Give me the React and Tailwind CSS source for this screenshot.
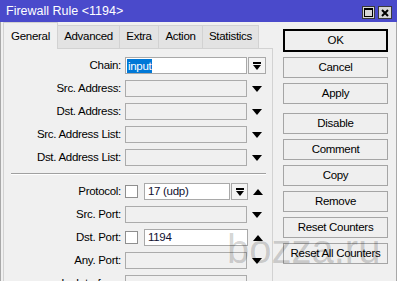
import React from "react";

const tabs = [
  { name: "General", w: "w-[55px]", active: true },
  { name: "Advanced", w: "w-[62px]" },
  { name: "Extra", w: "w-[39px]" },
  { name: "Action", w: "w-[44px]" },
  { name: "Statistics", w: "w-[56px]" },
];

// small drawings used by the combo boxes
function DownTri() {
  return (
    <svg width="10" height="6" viewBox="0 0 10 6">
      <path d="M0 0 H10 L5 6 Z" fill="#000" />
    </svg>
  );
}

function UpTri() {
  return (
    <svg width="10" height="6" viewBox="0 0 10 6">
      <path d="M0 6 H10 L5 0 Z" fill="#000" />
    </svg>
  );
}

function ComboBtn({ w }) {
  return (
    <div className={`${w} h-[17px] ml-[1px] border border-[#a9a9a9] bg-[#f4f4f4] flex items-center justify-center`}>
      <svg width="8" height="8" viewBox="0 0 8 8">
        <rect x="0" y="0" width="8" height="2" fill="#000" />
        <path d="M0 3 H8 L4 8 Z" fill="#000" />
      </svg>
    </div>
  );
}

function Label({ children }) {
  return <div className="w-[117px] text-right whitespace-nowrap">{children}</div>;
}

function Row({ label, children }) {
  return (
    <div className="flex items-center h-[17px]">
      <Label>{label}</Label>
      <div className="ml-[4px] flex items-center">{children}</div>
    </div>
  );
}

function EmptyRow({ label }) {
  return (
    <Row label={label}>
      <div className="w-[122px] h-[17px] border border-[#ababab] bg-[#f0f0f0]" />
      <div className="w-[20px] flex justify-center">
        <DownTri />
      </div>
    </Row>
  );
}

function Check() {
  return <div className="w-[13px] h-[13px] border border-[#8f8f8f] bg-white" />;
}

const buttons = ["Cancel", "Apply", "Disable", "Comment", "Copy", "Remove", "Reset Counters", "Reset All Counters"];

export default function App() {
  return (
    <div className="w-[397px] h-[281px] overflow-hidden relative bg-[#f0f0f0] font-['Liberation_Sans',Arial,sans-serif] text-[11.5px] tracking-[-0.3px] text-black">
      {/* title bar */}
      <div className="h-[22px] bg-[#4a4acb] flex items-center pl-[6px] pr-[5px]">
        <span className="text-white text-[12.5px] tracking-normal">Firewall Rule &lt;1194&gt;</span>
        <div className="ml-auto flex gap-[3px] mt-[3px]">
          <div className="w-[13px] h-[13px] bg-[#d6d6d6] border border-[#3a3a3a] flex items-center justify-center">
            <svg width="9" height="9" viewBox="0 0 9 9">
              <rect x="0.5" y="0.5" width="8" height="8" fill="none" stroke="#000" />
              <rect x="0" y="0" width="9" height="2" fill="#000" />
            </svg>
          </div>
          <div className="w-[14px] h-[13px] bg-[#d6d6d6] border border-[#3a3a3a] flex items-center justify-center">
            <svg width="8" height="8" viewBox="0 0 8 8">
              <path d="M1 1 L7 7 M7 1 L1 7" stroke="#000" strokeWidth="2" />
            </svg>
          </div>
        </div>
      </div>

      <div className="flex border-x border-[#a8a8a8] h-[259px]">
        {/* left: tabs + panel */}
        <div className="ml-[2px] w-[270px] flex flex-col">
          <div className="h-[28px] flex items-end">
            {tabs.map((t) =>
              t.active ? (
                <div
                  key={t.name}
                  className={`${t.w} h-[27px] -mb-px relative z-10 bg-[#f0f0f0] border-x border-t border-[#d2d2d2] flex items-center justify-center pt-[1px]`}
                >
                  {t.name}
                </div>
              ) : (
                <div
                  key={t.name}
                  className={`${t.w} h-[23px] bg-[#e3e3e3] border-r border-t border-[#d2d2d2] flex items-center justify-center`}
                >
                  {t.name}
                </div>
              )
            )}
          </div>
          <div className="flex-1 border border-[#d2d2d2] pt-[8px]">
            <div className="flex flex-col gap-[6px]">
              <Row label="Chain:">
                <div className="w-[122px] h-[17px] border border-[#a9a9a9] bg-white flex items-center pl-[1px]">
                  <span className="bg-[#0078d7] text-white leading-[14px] px-[1px]">input</span>
                </div>
                <ComboBtn w="w-[18px]" />
              </Row>
              <EmptyRow label="Src. Address:" />
              <EmptyRow label="Dst. Address:" />
              <EmptyRow label="Src. Address List:" />
              <EmptyRow label="Dst. Address List:" />
            </div>

            <div className="ml-[7px] mr-[6px] mt-[7px] mb-[8px] border-t border-[#a0a0a0] border-b border-b-white" />

            <div className="flex flex-col gap-[6px]">
              <Row label="Protocol:">
                <Check />
                <div className="ml-[6px] w-[86px] h-[17px] border border-[#a9a9a9] bg-white flex items-center pl-[3px] text-[#101030]">
                  17 (udp)
                </div>
                <ComboBtn w="w-[17px]" />
                <div className="w-[20px] flex justify-center">
                  <UpTri />
                </div>
              </Row>
              <EmptyRow label="Src. Port:" />
              <Row label="Dst. Port:">
                <Check />
                <div className="ml-[6px] w-[104px] h-[17px] border border-[#a9a9a9] bg-white flex items-center pl-[3px] text-[#101030]">
                  1194
                </div>
                <div className="w-[20px] flex justify-center">
                  <UpTri />
                </div>
              </Row>
              <EmptyRow label="Any. Port:" />
              <EmptyRow label="In. Interface:" />
            </div>
          </div>
        </div>

        {/* right: buttons */}
        <div className="ml-[10px] w-[105px] pt-[7px] flex flex-col">
          <div className="h-[23px] border-2 border-black bg-[#efefef] flex items-center justify-center">OK</div>
          {buttons.map((b) => (
            <div
              key={b}
              className={`h-[21px] border border-[#a5a5a5] bg-[#efefef] flex items-center justify-center ${
                b === "Disable" ? "mt-[9px]" : "mt-[5px]"
              }`}
            >
              {b}
            </div>
          ))}
        </div>
      </div>

      {/* watermark */}
      <div className="absolute left-[227px] top-[229px] text-[40px] leading-none tracking-normal text-black/[0.18] pointer-events-none">
        bozza.ru
      </div>
    </div>
  );
}
